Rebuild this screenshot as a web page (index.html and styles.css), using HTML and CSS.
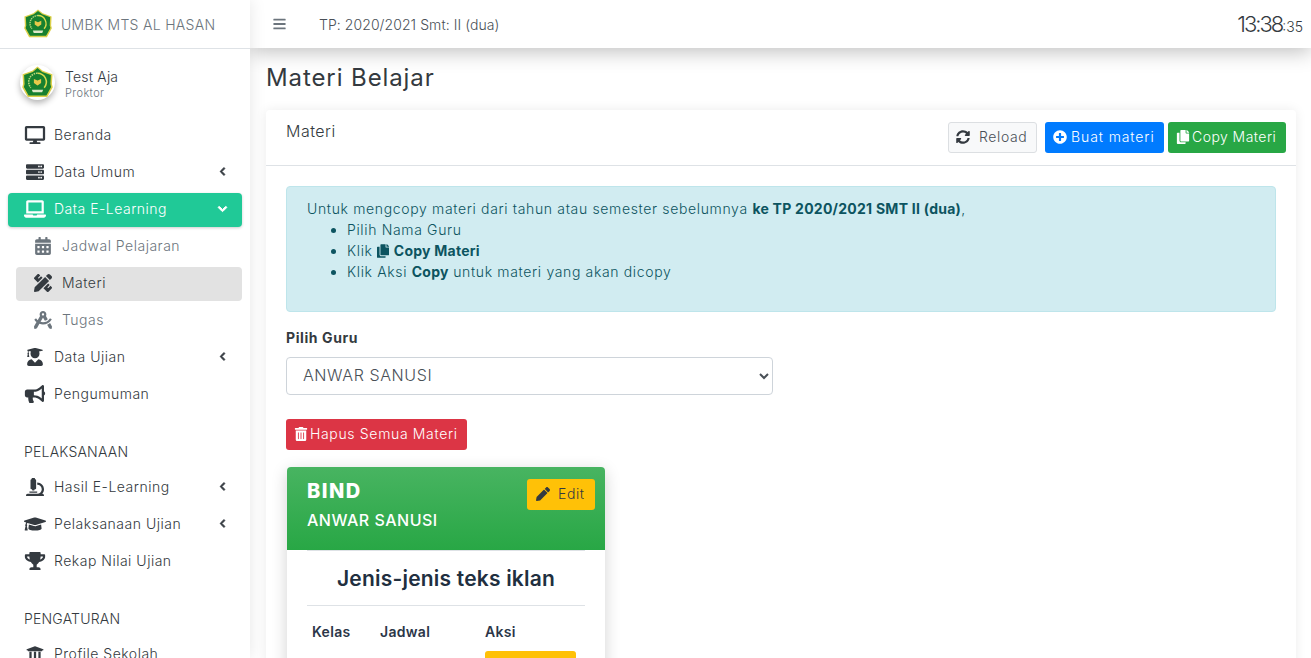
FILE: index.html
```html
<!DOCTYPE html>
<html>
<head>
	<meta charset="utf-8">
	<meta name="viewport" content="width=device-width, initial-scale=1">
	<title>Materi Belajar</title>
	<link rel="stylesheet" href="styles.css">
</head>
<body>
	<svg class="defs" width="0" height="0">
		<symbol id="logo" viewBox="0 0 32 32">
			<path fill="#dcd04a" d="M16 .5l5 4 9.500 3.500-.5 9.500.8 3-5.300 9.500H6.500L1.200 20.500l.8-3L1.500 8 11 4.500z"/>
			<path fill="#17802f" d="M16 2l4.500 3.700 8.500 3.100-.5 8.700.7 2.800-4.600 8.200H7.400L2.800 20.300l.7-2.800L3 8.800l8.500-3.100z"/>
			<path fill="none" stroke="#b6d67c" stroke-width="1.500" stroke-dasharray="1.500 .8" d="M16 7a8.500 8.500 0 0 0-6.500 14"/>
			<path fill="none" stroke="#d8d84e" stroke-width="1.500" d="M16 7a8.500 8.500 0 0 1 6.500 14"/>
			<path fill="#e8c94a" d="M12.500 12.500l3.500 1.500 3.500-1.500v4L16 19l-3.500-2.500z"/>
			<path fill="#dfe8c8" d="M10.500 23h11l-1 2.500h-9z"/>
		</symbol>
		<symbol id="i-desktop" viewBox="0 0 576 512"><path d="M528 0H48C21.5 0 0 21.500 0 48v320c0 26.500 21.500 48 48 48h192l-16 48h-72c-13.300 0-24 10.700-24 24s10.700 24 24 24h272c13.300 0 24-10.700 24-24s-10.700-24-24-24h-72l-16-48h192c26.500 0 48-21.500 48-48V48c0-26.500-21.500-48-48-48zm-16 352H64V64h448v288z"/></symbol>
		<symbol id="i-server" viewBox="0 0 512 512"><path fill-rule="evenodd" d="M32 32h448c18 0 32 14 32 32v64c0 18-14 32-32 32H32c-18 0-32-14-32-32V64c0-18 14-32 32-32zm400 40a24 24 0 1 0 0 48 24 24 0 0 0 0-48zm-64 0a24 24 0 1 0 0 48 24 24 0 0 0 0-48zM32 192h448c18 0 32 14 32 32v64c0 18-14 32-32 32H32c-18 0-32-14-32-32v-64c0-18 14-32 32-32zm400 40a24 24 0 1 0 0 48 24 24 0 0 0 0-48zm-64 0a24 24 0 1 0 0 48 24 24 0 0 0 0-48zM32 352h448c18 0 32 14 32 32v64c0 18-14 32-32 32H32c-18 0-32-14-32-32v-64c0-18 14-32 32-32zm400 40a24 24 0 1 0 0 48 24 24 0 0 0 0-48zm-64 0a24 24 0 1 0 0 48 24 24 0 0 0 0-48z"/></symbol>
		<symbol id="i-laptop" viewBox="0 0 640 512"><path d="M624 416H381.540c-.74 19.810-14.710 32-32.740 32H288c-18.690 0-33.020-17.470-32.770-32H16c-8.800 0-16 7.200-16 16v16c0 35.200 28.800 64 64 64h512c35.200 0 64-28.800 64-64v-16c0-8.800-7.200-16-16-16zM576 48c0-26.400-21.600-48-48-48H112C85.600 0 64 21.600 64 48v336h512V48zm-64 272H128V64h384v256z"/></symbol>
		<symbol id="i-calendar" viewBox="0 0 448 512"><path fill-rule="evenodd" d="M0 192h448v272c0 26.500-21.500 48-48 48H48c-26.500 0-48-21.500-48-48V192zm76 64c-6.600 0-12 5.400-12 12v40c0 6.600 5.400 12 12 12h40c6.600 0 12-5.400 12-12v-40c0-6.600-5.400-12-12-12H76zm128 0c-6.600 0-12 5.400-12 12v40c0 6.600 5.400 12 12 12h40c6.600 0 12-5.400 12-12v-40c0-6.600-5.400-12-12-12h-40zm128 0c-6.600 0-12 5.400-12 12v40c0 6.600 5.400 12 12 12h40c6.600 0 12-5.400 12-12v-40c0-6.600-5.400-12-12-12h-40zM76 384c-6.600 0-12 5.400-12 12v40c0 6.600 5.400 12 12 12h40c6.600 0 12-5.400 12-12v-40c0-6.600-5.400-12-12-12H76zm128 0c-6.600 0-12 5.400-12 12v40c0 6.600 5.400 12 12 12h40c6.600 0 12-5.400 12-12v-40c0-6.600-5.400-12-12-12h-40zm128 0c-6.600 0-12 5.400-12 12v40c0 6.600 5.400 12 12 12h40c6.600 0 12-5.400 12-12v-40c0-6.600-5.400-12-12-12h-40zM400 64h-48V16c0-8.800-7.200-16-16-16h-32c-8.800 0-16 7.200-16 16v48H160V16c0-8.800-7.200-16-16-16h-32c-8.800 0-16 7.200-16 16v48H48C21.500 64 0 85.500 0 112v48h448v-48c0-26.500-21.500-48-48-48z"/></symbol>
		<symbol id="i-pencil-ruler" viewBox="0 0 512 512"><path d="M109.460 244.040l134.580-134.560-44.120-44.120-61.680 61.680a7.919 7.919 0 0 1-11.210 0l-11.210-11.210c-3.100-3.100-3.100-8.120 0-11.210l61.680-61.680-33.640-33.650C131.470-3.100 111.390-3.100 99 9.290L9.290 99c-12.380 12.390-12.390 32.470 0 44.860l100.170 100.180zm388.470-116.800c18.760-18.760 18.750-49.170 0-67.930l-45.250-45.250c-18.760-18.760-49.180-18.760-67.950 0l-46.020 46.010 113.200 113.200 46.020-46.030zM316.080 82.710l-297 296.960L.32 487.110c-2.530 14.490 10.090 27.110 24.590 24.560l107.450-18.840L429.280 195.900 316.080 82.710zm186.630 285.430l-33.640-33.640-61.680 61.680c-3.100 3.100-8.120 3.100-11.210 0l-11.210-11.210c-3.090-3.100-3.090-8.120 0-11.210l61.680-61.680-44.140-44.140L267.930 402.500l100.210 100.200c12.390 12.390 32.470 12.390 44.860 0l89.710-89.700c12.390-12.390 12.390-32.470 0-44.860z"/></symbol>
		<symbol id="i-compass" viewBox="0 0 512 512"><path d="M457.010 344.420c-25.050 20.330-52.630 37.180-82.540 49.050l54.380 94.190 53.950 23.040c9.810 4.190 20.890-2.210 22.170-12.800l7.020-58.250-54.980-95.230zm42.490-94.560c4.860-7.670 1.890-17.990-6.050-22.390l-28.070-15.570c-7.480-4.150-16.610-1.460-21.260 5.720C403.010 281.150 332.250 320 256 320c-23.930 0-47.230-4.250-69.410-11.530l67.360-116.680c.7.020 1.340.21 2.050.21s1.350-.19 2.050-.21l51.090 88.500c31.230-8.960 59.560-25.750 82.610-48.920l-51.790-89.710C347.390 128.030 352 112.630 352 96c0-53.020-42.980-96-96-96s-96 42.980-96 96c0 16.630 4.610 32.030 12.050 45.660l-68.300 118.310c-12.550-11.610-23.960-24.590-33.680-39-4.790-7.100-13.970-9.620-21.380-5.330l-27.750 16.070c-7.850 4.540-10.630 14.900-5.640 22.470 15.570 23.640 34.690 44.210 55.980 62.020L0 439.660l7.020 58.250c1.280 10.590 12.360 16.990 22.170 12.800l53.950-23.040 70.800-122.630C186.130 377.280 220.620 384 256 384c99.050 0 190.880-51.010 243.500-134.140zM256 64c17.670 0 32 14.330 32 32s-14.330 32-32 32-32-14.330-32-32 14.330-32 32-32z"/></symbol>
		<symbol id="i-user-grad" viewBox="0 0 448 512"><path d="M319.400 320.600L224 416l-95.400-95.400C57.100 323.700 0 382.200 0 454.400v9.600c0 26.500 21.500 48 48 48h352c26.500 0 48-21.500 48-48v-9.600c0-72.200-57.100-130.700-128.600-133.800zM13.600 79.800l6.400 1.500v58.400c-7 4.200-12 11.500-12 20.300 0 8.400 4.600 15.400 11.100 19.700L3.500 242c-1.700 6.900 2.100 14 7.600 14h41.800c5.500 0 9.300-7.100 7.600-14l-15.600-62.300C51.400 175.400 56 168.400 56 160c0-8.800-5-16.100-12-20.300V87.100l66 15.900c-8.600 17.200-14 36.400-14 57 0 70.700 57.300 128 128 128s128-57.300 128-128c0-20.600-5.300-39.800-14-57l96.300-23.200c18.200-4.400 18.200-27.100 0-31.500l-190.400-46c-13-3.100-26.700-3.100-39.700 0L13.600 48.200c-18.100 4.400-18.100 27.200 0 31.600z"/></symbol>
		<symbol id="i-bullhorn" viewBox="0 0 576 512"><path d="M576 240c0-23.630-12.950-44.040-32-55.120V32.010C544 23.260 537.020 0 512 0c-7.120 0-14.190 2.380-19.980 7.020l-85.030 68.030C364.280 109.190 310.660 128 256 128H64c-35.350 0-64 28.650-64 64v96c0 35.350 28.650 64 64 64h33.700c-1.390 10.480-2.180 21.140-2.180 32 0 39.770 9.260 77.350 25.560 110.940 5.190 10.690 16.520 17.060 28.400 17.060h74.280c26.050 0 41.690-29.840 25.900-50.560-16.400-21.520-26.150-48.360-26.150-77.440 0-11.110 1.620-21.790 4.410-32H256c54.660 0 108.280 18.810 150.980 52.950l85.030 68.030a32.023 32.023 0 0 0 19.980 7.020c24.920 0 32-22.780 32-32V295.130C563.050 284.040 576 263.630 576 240zm-96 141.420l-33.050-26.440C392.950 311.780 325.120 288 256 288v-96c69.120 0 136.950-23.780 190.950-66.980L480 98.580v282.840z"/></symbol>
		<symbol id="i-microscope" viewBox="0 0 512 512"><path d="M160 320h12v16c0 8.840 7.160 16 16 16h40c8.840 0 16-7.160 16-16v-16h12c17.670 0 32-14.330 32-32V64c0-17.670-14.330-32-32-32V16c0-8.840-7.160-16-16-16h-64c-8.840 0-16 7.160-16 16v16c-17.670 0-32 14.330-32 32v224c0 17.670 14.330 32 32 32zm304 128h-1.290C493.240 413.990 512 369.200 512 320c0-105.880-86.120-192-192-192v64c70.580 0 128 57.420 128 128s-57.420 128-128 128H48c-26.510 0-48 21.490-48 48 0 8.840 7.160 16 16 16h480c8.840 0 16-7.160 16-16 0-26.510-21.490-48-48-48zm-360-32h208c4.420 0 8-3.580 8-8v-16c0-4.420-3.580-8-8-8H104c-4.420 0-8 3.580-8 8v16c0 4.420 3.580 8 8 8z"/></symbol>
		<symbol id="i-cap" viewBox="0 0 640 512"><path d="M622.340 153.200L343.400 67.500c-15.200-4.670-31.600-4.670-46.790 0L17.660 153.200c-23.540 7.230-23.540 38.360 0 45.590l48.630 14.940c-10.670 13.190-17.230 29.280-17.880 46.900C38.780 266.150 32 276.110 32 288c0 10.780 5.680 19.850 13.860 25.650L20.330 428.530C18.110 438.520 25.710 448 35.940 448h56.110c10.240 0 17.840-9.480 15.620-19.470L82.140 313.650C90.320 307.850 96 298.780 96 288c0-11.570-6.470-21.250-15.660-26.870.76-15.020 8.440-28.300 20.690-36.720L296.600 284.500c9.060 2.780 26.440 6.250 46.790 0l278.950-85.700c23.550-7.240 23.550-38.360 0-45.600zM352.790 315.090c-28.530 8.760-52.840 3.920-65.590 0l-145.020-44.550L128 384c0 35.350 85.960 64 192 64s192-28.650 192-64l-14.180-113.470-145.030 44.560z"/></symbol>
		<symbol id="i-trophy" viewBox="0 0 576 512"><path d="M552 64H448V24c0-13.300-10.700-24-24-24H152c-13.300 0-24 10.700-24 24v40H24C10.700 64 0 74.700 0 88v56c0 35.700 22.500 72.400 61.900 100.700 31.500 22.700 69.800 37.100 110 41.700C203.300 338.500 240 360 240 360v72h-48c-35.300 0-64 20.700-64 56v12c0 6.600 5.400 12 12 12h296c6.600 0 12-5.400 12-12v-12c0-35.300-28.700-56-64-56h-48v-72s36.700-21.500 68.100-73.600c40.300-4.600 78.600-19 110-41.700 39.300-28.300 61.900-65 61.900-100.700V88c0-13.300-10.700-24-24-24zM99.300 192.800C74.900 175.200 64 155.600 64 144v-16h64.200c1 32.600 5.800 61.200 12.800 86.200-15.100-5.200-29.200-12.400-41.700-21.400zM512 144c0 16.100-17.700 36.100-35.300 48.800-12.500 9-26.700 16.200-41.800 21.400 7-25 11.800-53.600 12.800-86.200H512v16z"/></symbol>
		<symbol id="i-bank" viewBox="0 0 512 512"><path d="M496 128v16a8 8 0 0 1-8 8h-24v12c0 6.627-5.373 12-12 12H60c-6.627 0-12-5.373-12-12v-12H24a8 8 0 0 1-8-8v-16a8 8 0 0 1 4.941-7.392l232-88a7.996 7.996 0 0 1 6.118 0l232 88A8 8 0 0 1 496 128zm-24 304H40c-13.255 0-24 10.745-24 24v16a8 8 0 0 0 8 8h464a8 8 0 0 0 8-8v-16c0-13.255-10.745-24-24-24zM96 192v192H60c-6.627 0-12 5.373-12 12v20h416v-20c0-6.627-5.373-12-12-12h-36V192h-64v192h-64V192h-64v192h-64V192H96z"/></symbol>
		<symbol id="i-left" viewBox="0 0 320 512"><path d="M34.520 239.030L228.870 44.690c9.370-9.370 24.570-9.370 33.940 0l22.670 22.670c9.360 9.360 9.370 24.520.04 33.900L131.490 256l154.020 154.750c9.340 9.380 9.320 24.540-.04 33.900l-22.670 22.670c-9.370 9.370-24.570 9.370-33.940 0L34.520 272.970c-9.370-9.370-9.370-24.570 0-33.940z"/></symbol>
		<symbol id="i-down" viewBox="0 0 448 512"><path d="M207.029 381.476L12.686 187.132c-9.373-9.373-9.373-24.569 0-33.941l22.667-22.667c9.357-9.357 24.522-9.375 33.901-.04L224 284.505l154.745-154.021c9.379-9.335 24.544-9.317 33.901.04l22.667 22.667c9.373 9.373 9.373 24.569 0 33.941L240.971 381.476c-9.373 9.372-24.569 9.372-33.942 0z"/></symbol>
		<symbol id="i-bars" viewBox="0 0 448 512"><path d="M16 132h416c8.837 0 16-7.163 16-16V76c0-8.837-7.163-16-16-16H16C7.163 60 0 67.163 0 76v40c0 8.837 7.163 16 16 16zm0 160h416c8.837 0 16-7.163 16-16v-40c0-8.837-7.163-16-16-16H16c-8.837 0-16 7.163-16 16v40c0 8.837 7.163 16 16 16zm0 160h416c8.837 0 16-7.163 16-16v-40c0-8.837-7.163-16-16-16H16c-8.837 0-16 7.163-16 16v40c0 8.837 7.163 16 16 16z"/></symbol>
		<symbol id="i-sync" viewBox="0 0 512 512"><path d="M370.720 133.280C339.458 104.008 298.888 87.962 255.848 88c-77.458.068-144.328 53.178-162.791 126.850-1.344 5.363-6.122 9.150-11.651 9.150H24.103c-7.498 0-13.194-6.807-11.807-14.176C33.933 94.924 134.813 8 256 8c66.448 0 126.791 26.136 171.315 68.685L463.030 40.970C478.149 25.851 504 36.559 504 57.941V192c0 13.255-10.745 24-24 24H345.941c-21.382 0-32.090-25.851-16.971-40.971l41.750-41.749zM32 296h134.059c21.382 0 32.090 25.851 16.971 40.971l-41.750 41.750c31.262 29.273 71.835 45.319 114.876 45.280 77.418-.07 144.315-53.144 162.787-126.849 1.344-5.363 6.122-9.150 11.651-9.150h57.304c7.498 0 13.194 6.807 11.807 14.176C478.067 417.076 377.187 504 256 504c-66.448 0-126.791-26.136-171.315-68.685L48.970 471.030C33.851 486.149 8 475.441 8 454.059V320c0-13.255 10.745-24 24-24z"/></symbol>
		<symbol id="i-plus" viewBox="0 0 512 512"><path d="M256 8C119 8 8 119 8 256s111 248 248 248 248-111 248-248S393 8 256 8zm144 276c0 6.600-5.400 12-12 12h-92v92c0 6.600-5.400 12-12 12h-56c-6.600 0-12-5.400-12-12v-92h-92c-6.600 0-12-5.400-12-12v-56c0-6.600 5.400-12 12-12h92v-92c0-6.600 5.400-12 12-12h56c6.600 0 12 5.400 12 12v92h92c6.600 0 12 5.400 12 12v56z"/></symbol>
		<symbol id="i-copy" viewBox="0 0 448 512"><path d="M320 448v40c0 13.255-10.745 24-24 24H24c-13.255 0-24-10.745-24-24V120c0-13.255 10.745-24 24-24h72v296c0 30.879 25.121 56 56 56h168zm0-344V0H152c-13.255 0-24 10.745-24 24v368c0 13.255 10.745 24 24 24h272c13.255 0 24-10.745 24-24V128H344c-13.200 0-24-10.800-24-24zm120.971-31.029L375.029 7.029A24 24 0 0 0 358.059 0H352v96h96v-6.059a24 24 0 0 0-7.029-16.970z"/></symbol>
		<symbol id="i-trash" viewBox="0 0 448 512"><path d="M32 464a48 48 0 0 0 48 48h288a48 48 0 0 0 48-48V128H32zm272-256a16 16 0 0 1 32 0v224a16 16 0 0 1-32 0zm-96 0a16 16 0 0 1 32 0v224a16 16 0 0 1-32 0zm-96 0a16 16 0 0 1 32 0v224a16 16 0 0 1-32 0zM432 32H312l-9.400-18.700A24 24 0 0 0 281.100 0H166.800a23.720 23.720 0 0 0-21.400 13.300L136 32H16A16 16 0 0 0 0 48v32a16 16 0 0 0 16 16h416a16 16 0 0 0 16-16V48a16 16 0 0 0-16-16z"/></symbol>
		<symbol id="i-pencil" viewBox="0 0 512 512"><path d="M497.900 142.100l-46.100 46.100c-4.700 4.700-12.300 4.700-17 0l-111-111c-4.700-4.700-4.700-12.300 0-17l46.100-46.100c18.700-18.700 49.100-18.700 67.900 0l60.100 60.100c18.800 18.700 18.800 49.100 0 67.900zM284.200 99.800L21.600 362.400.4 483.900c-2.900 16.400 11.400 30.600 27.800 27.800l121.500-21.300 262.600-262.600c4.700-4.700 4.700-12.300 0-17l-111-111c-4.800-4.700-12.400-4.700-17.100 0z"/></symbol>
	</svg>

	<div class="layout">
		<aside class="sidebar">
			<div class="brand">
				<svg class="brand-logo"><use href="#logo"/></svg>
				<span class="brand-name">UMBK MTS AL HASAN</span>
			</div>
			<div class="user">
				<div class="avatar"><svg class="avatar-logo"><use href="#logo"/></svg></div>
				<div class="user-text">
					<div class="user-name">Test Aja</div>
					<div class="user-role">Proktor</div>
				</div>
			</div>
			<nav class="nav">
				<a class="nav-item"><svg class="ico"><use href="#i-desktop"/></svg>Beranda</a>
				<a class="nav-item"><svg class="ico"><use href="#i-server"/></svg>Data Umum<svg class="arrow"><use href="#i-left"/></svg></a>
				<a class="nav-item active"><svg class="ico"><use href="#i-laptop"/></svg>Data E-Learning<svg class="arrow arrow-down"><use href="#i-down"/></svg></a>
				<a class="nav-item sub"><svg class="ico"><use href="#i-calendar"/></svg>Jadwal Pelajaran</a>
				<a class="nav-item sub current"><svg class="ico"><use href="#i-pencil-ruler"/></svg>Materi</a>
				<a class="nav-item sub"><svg class="ico"><use href="#i-compass"/></svg>Tugas</a>
				<a class="nav-item"><svg class="ico"><use href="#i-user-grad"/></svg>Data Ujian<svg class="arrow"><use href="#i-left"/></svg></a>
				<a class="nav-item"><svg class="ico"><use href="#i-bullhorn"/></svg>Pengumuman</a>
				<div class="nav-head">PELAKSANAAN</div>
				<a class="nav-item"><svg class="ico"><use href="#i-microscope"/></svg>Hasil E-Learning<svg class="arrow"><use href="#i-left"/></svg></a>
				<a class="nav-item"><svg class="ico"><use href="#i-cap"/></svg>Pelaksanaan Ujian<svg class="arrow"><use href="#i-left"/></svg></a>
				<a class="nav-item"><svg class="ico"><use href="#i-trophy"/></svg>Rekap Nilai Ujian</a>
				<div class="nav-head">PENGATURAN</div>
				<a class="nav-item"><svg class="ico"><use href="#i-bank"/></svg>Profile Sekolah</a>
			</nav>
		</aside>

		<div class="main">
			<header class="topbar">
				<svg class="bars"><use href="#i-bars"/></svg>
				<span class="period">TP: 2020/2021 Smt: II (dua)</span>
				<span class="clock">13:38<small>:35</small></span>
			</header>
			<div class="content">
				<h1 class="page-title">Materi Belajar</h1>
				<section class="card">
					<div class="card-head">
						<span class="card-title">Materi</span>
						<div class="tools">
							<button class="btn btn-light"><svg class="btn-ico"><use href="#i-sync"/></svg>Reload</button>
							<button class="btn btn-blue"><svg class="btn-ico"><use href="#i-plus"/></svg>Buat materi</button>
							<button class="btn btn-green"><svg class="btn-ico"><use href="#i-copy"/></svg>Copy Materi</button>
						</div>
					</div>
					<div class="card-body">
						<div class="alert">
							Untuk mengcopy materi dari tahun atau semester sebelumnya <b>ke TP 2020/2021 SMT II (dua)</b>,
							<ul>
								<li>Pilih Nama Guru</li>
								<li>Klik <svg class="inline-ico"><use href="#i-copy"/></svg> <b>Copy Materi</b></li>
								<li>Klik Aksi <b>Copy</b> untuk materi yang akan dicopy</li>
							</ul>
						</div>
						<label class="field-label">Pilih Guru</label>
						<select class="select"><option>ANWAR SANUSI</option></select>
						<button class="btn btn-red"><svg class="btn-ico"><use href="#i-trash"/></svg>Hapus Semua Materi</button>
						<article class="materi">
							<div class="materi-head">
								<div>
									<div class="materi-code">BIND</div>
									<div class="materi-guru">ANWAR SANUSI</div>
								</div>
								<button class="btn btn-yellow"><svg class="btn-ico"><use href="#i-pencil"/></svg>Edit</button>
							</div>
							<div class="materi-body">
								<h2 class="materi-title">Jenis-jenis teks iklan</h2>
								<div class="materi-table">
									<span class="col-kelas">Kelas</span>
									<span class="col-jadwal">Jadwal</span>
									<span class="col-aksi">Aksi<i class="aksi-btn"></i></span>
								</div>
							</div>
						</article>
					</div>
				</section>
			</div>
		</div>
	</div>
</body>
</html>
```

FILE: styles.css
```css
html, body {
	margin: 0;
	height: 658px;
	overflow: hidden;
}
body {
	font-family: "Inter", "Liberation Sans", sans-serif;
	font-size: 14px;
	font-weight: 300;
	color: #343a40;
	background: #fff;
}
.defs {
	position: absolute;
}
.layout {
	display: flex;
	height: 658px;
}

/* sidebar */
.sidebar {
	width: 250px;
	flex: none;
	background: #fff;
	box-shadow: 0 0 16px rgba(0, 0, 0, .1);
	z-index: 2;
	overflow: hidden;
}
.brand {
	display: flex;
	align-items: center;
	height: 48px;
	padding-left: 23px;
	border-bottom: 1px solid #dee2e6;
}
.brand-logo {
	width: 30px;
	height: 30px;
	margin-right: 8px;
}
.brand-name {
	font-size: 14px;
	letter-spacing: .3px;
	color: #6c757d;
}
.user {
	display: flex;
	align-items: center;
	height: 70px;
	padding: 0 0 4px 20px;
	box-sizing: border-box;
}
.avatar {
	width: 35px;
	height: 35px;
	border-radius: 50%;
	background: #fff;
	box-shadow: 0 3px 6px rgba(0, 0, 0, .3);
	display: flex;
	align-items: center;
	justify-content: center;
	margin-right: 10px;
}
.avatar-logo {
	width: 33px;
	height: 33px;
}
.user-text {
	padding-top: 3px;
}
.user-name {
	font-size: 14px;
	line-height: 16px;
	letter-spacing: .2px;
}
.user-role {
	margin-top: 2px;
	font-size: 11px;
	line-height: 12px;
	letter-spacing: .4px;
	color: #6c757d;
}
.nav {
	padding: 0 8px;
}
.nav-item {
	display: flex;
	align-items: center;
	height: 34px;
	margin-bottom: 3px;
	padding: 0 0 3px 16px;
	box-sizing: border-box;
	border-radius: 4px;
	font-size: 14px;
	letter-spacing: .5px;
	color: #343a40;
}
.ico {
	width: 22px;
	height: 18px;
	margin-right: 8px;
	fill: #343a40;
}
.arrow {
	width: 7px;
	height: 9px;
	margin-left: auto;
	margin-right: 16px;
	fill: #343a40;
	stroke: #343a40;
	stroke-width: 50;
}
.arrow-down {
	width: 11px;
	height: 10px;
	margin-right: 14px;
	stroke: #fff;
}
.active {
	background: #20c997;
	color: #fff;
	box-shadow: 0 1px 3px rgba(0, 0, 0, .2);
}
.active .ico, .active .arrow {
	fill: #fff;
}
.sub {
	margin-left: 8px;
	padding-left: 18px;
	color: #6c757d;
}
.sub .ico {
	width: 18px;
	margin-right: 10px;
	fill: #6c757d;
}
.current {
	background: #e2e2e2;
	color: #343a40;
}
.current .ico {
	fill: #343a40;
}
.nav-head {
	margin-top: 29px;
	margin-bottom: 9px;
	padding-left: 16px;
	line-height: 21px;
	font-size: 14px;
	letter-spacing: .2px;
	color: #343a40;
}

/* top bar */
.main {
	flex: 1;
	min-width: 0;
	background: #fff;
}
.topbar {
	display: flex;
	align-items: center;
	height: 48px;
	padding: 0 8px 0 23px;
	background: #fff;
	box-shadow: 0 4px 20px rgba(0, 0, 0, .25);
	position: relative;
}
.bars {
	width: 13px;
	height: 14px;
	margin-right: 33px;
	fill: #6c757d;
}
.period {
	font-size: 14px;
	letter-spacing: .07px;
	color: #495057;
}
.clock {
	margin-left: auto;
	font-size: 22px;
	letter-spacing: -2px;
	color: #343a40;
}
.clock small {
	font-size: 14px;
	letter-spacing: 0;
}

/* content */
.content {
	padding: 0 15px 0 16px;
}
.page-title {
	margin: 0;
	padding-top: 14px;
	height: 48px;
	box-sizing: border-box;
	font-size: 24px;
	line-height: 32px;
	font-weight: 400;
	letter-spacing: .9px;
	color: #343a40;
}
.card {
	margin-top: 14px;
	background: #fff;
	border-radius: 4px;
	box-shadow: 0 0 12px rgba(0, 0, 0, .08);
}
.card-head {
	display: flex;
	justify-content: space-between;
	height: 56px;
	padding: 12px 10px 0 20px;
	box-sizing: border-box;
	border-bottom: 1px solid #dee2e6;
}
.card-title {
	margin-top: -1px;
	font-size: 16px;
	letter-spacing: .5px;
}
.tools {
	display: flex;
	gap: 4px;
}
.btn {
	display: inline-flex;
	align-items: center;
	height: 31px;
	padding: 0 7px 2px;
	border: 1px solid transparent;
	border-radius: 3px;
	font: inherit;
	font-size: 14px;
	letter-spacing: .6px;
	white-space: nowrap;
}
.btn-ico {
	width: 14px;
	height: 14px;
	margin-right: 2px;
	fill: currentColor;
}
.btn-light {
	width: 89px;
	margin-right: 4px;
	background: #f8f9fa;
	border-color: #dcdfe2;
	color: #495057;
}
.btn-light .btn-ico {
	margin-right: 9px;
	fill: #343a40;
}
.btn-blue {
	background: #007bff;
	color: #fff;
	width: 119px;
	letter-spacing: .9px;
}
.btn-blue .btn-ico {
	margin-right: 4px;
}
.btn-green {
	background: #28a745;
	color: #fff;
	width: 118px;
	letter-spacing: .45px;
}
.btn-red {
	display: flex;
	background: #dc3545;
	color: #fff;
	width: 181px;
	letter-spacing: .66px;
}
.btn-yellow {
	padding-left: 8px;
	background: #ffc107;
	color: #343a40;
	width: 68px;
}
.btn-yellow .btn-ico {
	margin-right: 8px;
}
.card-body {
	padding: 20px 20px 0;
}
.alert {
	height: 126px;
	box-sizing: border-box;
	padding: 11px 20px;
	background: #d1ecf1;
	border: 1px solid #bee5eb;
	border-radius: 4px;
	color: #0c5460;
	line-height: 21px;
	letter-spacing: .65px;
}
.alert ul {
	margin: 0;
	padding-left: 40px;
}
.alert b {
	font-weight: 700;
	letter-spacing: .25px;
}
.inline-ico {
	width: 12px;
	height: 14px;
	fill: #0c5460;
	vertical-align: -2px;
}
.field-label {
	display: block;
	margin: 15px 0 9px;
	line-height: 21px;
	font-weight: 700;
	letter-spacing: .6px;
	color: #343a40;
}
.select {
	display: block;
	width: 487px;
	height: 38px;
	padding: 0 12px 2px;
	background: #fff;
	border: 1px solid #ced4da;
	border-radius: 4px;
	font: inherit;
	font-size: 16px;
	letter-spacing: .6px;
	color: #495057;
	margin-bottom: 24px;
}
.materi {
	width: 318px;
	margin: 17px 0 0 1px;
	border-radius: 4px;
	background: #fff;
	box-shadow: 0 4px 16px rgba(0, 0, 0, .18);
	overflow: hidden;
}
.materi-head {
	display: flex;
	justify-content: space-between;
	height: 83px;
	padding: 12px 10px 0 20px;
	box-sizing: border-box;
	background: linear-gradient(#48b461, #28a745);
	color: #fff;
}
.materi-code {
	font-size: 20px;
	font-weight: 800;
	line-height: 24px;
	letter-spacing: 1.500px;
}
.materi-guru {
	margin-top: 5px;
	font-size: 16px;
	font-weight: 500;
	line-height: 24px;
	letter-spacing: .5px;
}
.materi-body {
	padding: 0 20px;
}
.materi-title {
	margin: 0;
	height: 56px;
	box-sizing: border-box;
	border-top: 1px solid #dee2e6;
	border-bottom: 1px solid #dee2e6;
	text-align: center;
	font-size: 21px;
	font-weight: 600;
	line-height: 56px;
	letter-spacing: .2px;
	color: #212f3f;
}
.materi-table {
	display: flex;
	padding: 17px 5px 0;
	color: #2b3648;
	font-weight: 600;
	letter-spacing: .3px;
}
.col-kelas {
	width: 68px;
}
.col-jadwal {
	width: 105px;
}
.aksi-btn {
	display: block;
	width: 91px;
	height: 30px;
	margin-top: 11px;
	background: #ffc107;
	border-radius: 3px;
}
```
